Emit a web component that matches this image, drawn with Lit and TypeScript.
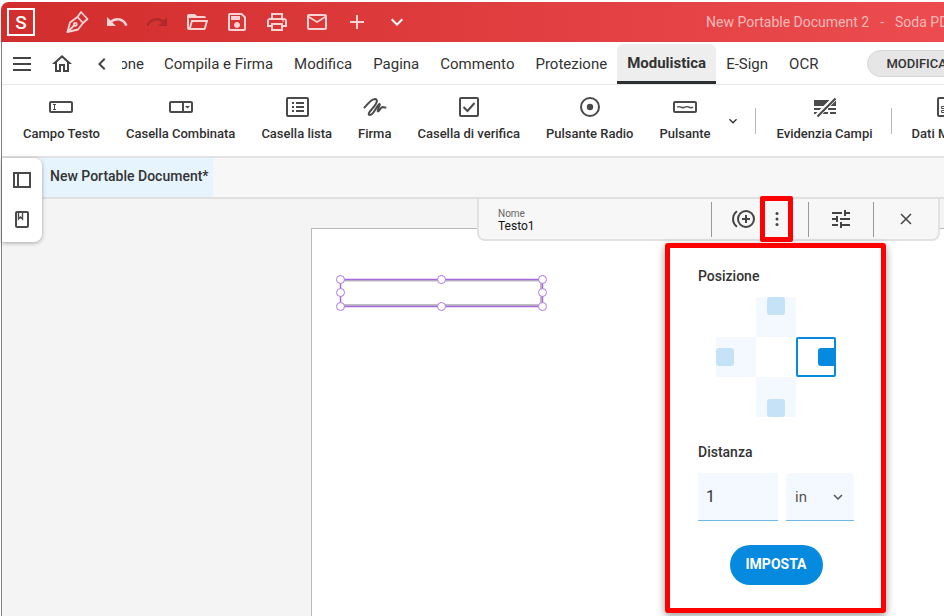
import { LitElement, html, css, svg } from "lit";
import { customElement, property, state } from "lit/decorators.js";

const fill = (d: string) => svg`<path d=${d} fill="currentColor" />`;

const ICONS: Record<string, unknown> = {
  pen: svg`<g fill="none" stroke="currentColor" stroke-width="1.8" stroke-linejoin="round" stroke-linecap="round">
    <path d="M2.500 22 5 12.500l7.500-5.500 5.500 6-5 6.500z"/><path d="m12.500 7 3.500-5 6.500 7-4.500 4M2.500 22l7-7"/><circle cx="10.300" cy="14.300" r="1.500"/></g>`,
  undo: fill("M12.5 8c-2.65 0-5.05.99-6.9 2.6L2 7v9h9l-3.62-3.62c1.39-1.16 3.16-1.88 5.12-1.88 3.54 0 6.55 2.31 7.6 5.5l2.37-.78C21.08 11.03 17.15 8 12.5 8z"),
  redo: fill("M18.4 10.6C16.55 8.99 14.15 8 11.5 8c-4.65 0-8.58 3.03-9.96 7.22L3.9 16c1.05-3.19 4.05-5.5 7.6-5.5 1.95 0 3.73.72 5.12 1.88L13 16h9V7l-3.6 3.6z"),
  folder: fill("M6.1 10 4 18V8h17a2 2 0 0 0-2-2h-7l-2-2H4a2 2 0 0 0-2 2v12a2 2 0 0 0 2 2h15c.9 0 1.7-.6 1.9-1.5L23.2 10H6.1M19 18H6l1.600-6h13L19 18z"),
  save: fill("M17 3H5c-1.110 0-2 .9-2 2v14c0 1.100.89 2 2 2h14c1.100 0 2-.9 2-2V7l-4-4m2 16H5V5h11.170L19 7.830V19m-7-7c-1.660 0-3 1.340-3 3s1.340 3 3 3 3-1.340 3-3-1.340-3-3-3M6 6h9v4H6V6z"),
  print: fill("M19 8h-1V3H6v5H5c-1.660 0-3 1.340-3 3v6h4v4h12v-4h4v-6c0-1.660-1.340-3-3-3zM8 5h8v3H8V5zm8 14H8v-4h8v4zm2-4v-2H6v2H4v-4c0-.55.45-1 1-1h14c.55 0 1 .45 1 1v4h-2zm-1-3.500h2v-1h-2z"),
  mail: fill("M22 6c0-1.100-.9-2-2-2H4c-1.100 0-2 .9-2 2v12c0 1.100.9 2 2 2h16c1.100 0 2-.9 2-2V6zm-2 0-8 5-8-5h16zm0 12H4V8l8 5 8-5v10z"),
  plus: fill("M11 5h2v6h6v2h-6v6h-2v-6H5v-2h6z"),
  down: fill("M7.410 8.580 12 13.170l4.590-4.590L18 10l-6 6-6-6 1.410-1.420z"),
  left: fill("M15.410 16.580 10.830 12l4.580-4.590L14 6l-6 6 6 6 1.410-1.420z"),
  menu: fill("M3 5h18v2H3zM3 11h18v2H3zM3 17h18v2H3z"),
  home: fill("M12 5.690l5 4.500V18h-2v-6H9v6H7v-7.810l5-4.500M12 3 2 12h3v8h6v-6h2v6h6v-8h3L12 3z"),
  text: svg`<rect x="1" y="7" width="22" height="10" rx="1" fill="none" stroke="currentColor" stroke-width="2"/>
    <path d="M4 9.500h3M4 14.500h3M5.500 9.500v5" fill="none" stroke="currentColor"/>`,
  combo: svg`<rect x="1" y="7" width="22" height="10" rx="1" fill="none" stroke="currentColor" stroke-width="2"/>
    <path d="M14 7v10" stroke="currentColor" stroke-width="2"/><path d="M16 11h5l-2.500 2.500z" fill="currentColor"/>`,
  list: svg`<rect x="2" y="3" width="21" height="18" rx="1" fill="none" stroke="currentColor" stroke-width="2"/>
    <path d="M7 8h2m2 0h8M7 12h2m2 0h8M7 16h2m2 0h8" stroke="currentColor" stroke-width="2"/>`,
  sign: svg`<path d="M1.500 12.500C5 9 8 4 12 4c4 .5 1 6-3 10-3 3.200-4.500 6-2 6 4 0 7-10.500 9.500-11 1.500 0-3 7-1.500 7.500 1.500 0 2.500-4 4.500-4.500 1 0 1.500.6 3 .5" fill="none" stroke="currentColor" stroke-width="2" stroke-linecap="round"/>`,
  check: svg`<rect x="3" y="3" width="18" height="18" rx="1" fill="none" stroke="currentColor" stroke-width="2"/>
    <path d="m6.500 12 4 4 7-8" fill="none" stroke="currentColor" stroke-width="2"/>`,
  radio: svg`<circle cx="12" cy="12" r="9" fill="none" stroke="currentColor" stroke-width="2"/><circle cx="12" cy="12" r="3.200" fill="currentColor"/>`,
  button: svg`<rect x="1" y="7" width="22" height="10" rx="1" fill="none" stroke="currentColor" stroke-width="2"/>
    <path d="M4 12.200q2-1.200 4 0t4 0 4 0 4 0" fill="none" stroke="currentColor" stroke-width="1.400"/>`,
  highlight: svg`<path d="M1 5h22v6H1zM1 13h8v2H1zm14 0h8v2h-8zM1 17h5v2H1zm9 0h5v2h-5zm7 0h6v2h-6z" fill="currentColor"/>
    <path d="M2 23 23 2" stroke="#fff" stroke-width="5"/><path d="M4.500 21.500 22.500 3.500" stroke="currentColor" stroke-width="2.200"/>`,
  data: svg`<rect x="3" y="3" width="16" height="18" rx="1" fill="none" stroke="currentColor" stroke-width="2"/>
    <path d="M6.500 11.500h10v2h-10zm0 4h10v2h-10z" fill="none" stroke="currentColor"/>`,
  panel: svg`<path d="M4 5h16v14H4zM8 5v14" fill="none" stroke="currentColor" stroke-width="2"/>`,
  bookmark: svg`<rect x="6" y="5" width="12" height="15" rx="1" fill="none" stroke="currentColor" stroke-width="2"/>
    <path d="M8.500 6v6l2-2 2 2V6" fill="none" stroke="currentColor" stroke-width="1.400"/>`,
  multi: svg`<g fill="none" stroke="currentColor" stroke-width="2"><circle cx="15" cy="12" r="8"/><path d="M15 8v8m-4-4h8M6 4.300a9.500 9.500 0 0 0 0 15.400"/></g>`,
  dots: svg`<g fill="currentColor"><circle cx="12" cy="6.500" r="1.500"/><circle cx="12" cy="12" r="1.500"/><circle cx="12" cy="17.500" r="1.500"/></g>`,
  tune: fill("M3 17v2h6v-2H3M3 5v2h10V5H3m10 16v-2h8v-2h-8v-2h-2v6h2M7 9v2H3v2h4v2h2V9H7m14 4v-2H11v2h10m-6-4h2V7h4V5h-4V3h-2v6z"),
  close: svg`<path d="m7 7 10 10M17 7 7 17" stroke="currentColor" stroke-width="1.500"/>`,
};

@customElement("ui-icon")
class UiIcon extends LitElement {
  @property() name = "";
  static styles = css`
    :host { display: block; width: 24px; height: 24px; flex: none; }
    svg { display: block; width: 100%; height: 100%; }
  `;
  render() {
    return html`<svg viewBox="0 0 24 24" aria-hidden="true">${ICONS[this.name]}</svg>`;
  }
}

const QUICK = [
  ["pen", "Firma"], ["undo", "Annulla"], ["redo", "Ripeti"], ["folder", "Apri"], ["save", "Salva"],
  ["print", "Stampa"], ["mail", "Email"], ["plus", "Nuovo"], ["down", "Altro"],
];
const MENU = ["Compila e Firma", "Modifica", "Pagina", "Commento", "Protezione", "Modulistica", "E-Sign", "OCR"];
const TOOLS = [
  ["text", "Campo Testo"], ["combo", "Casella Combinata"], ["list", "Casella lista"], ["sign", "Firma"],
  ["check", "Casella di verifica"], ["radio", "Pulsante Radio"], ["button", "Pulsante"],
];
const HANDLES = [[5, 5], [106, 5], [207, 5], [5, 18], [207, 18], [5, 32], [106, 32], [207, 32]];

@customElement("app-root")
class AppRoot extends LitElement {
  @state() private side = "right";

  static styles = css`
    :host {
      display: flex; flex-direction: column; box-sizing: border-box; min-height: 100vh;
      padding: 2px 0 0 1px; overflow: hidden; background: #fff; color: #333;
      font-family: Roboto, "Liberation Sans", sans-serif; font-size: 16px; white-space: nowrap;
    }
    * { box-sizing: border-box; }
    button, input, select { font: inherit; color: inherit; margin: 0; padding: 0; border: 0; background: none; }
    button { display: flex; align-items: center; justify-content: center; flex: none; cursor: pointer; }
    .titlebar {
      display: flex; align-items: center; height: 40px; overflow: hidden; border-radius: 8px 0 0 0; color: #fad4d4;
      background: linear-gradient(90deg, #d22d2d, #ec4c4f);
    }
    .logo {
      display: grid; place-items: center; flex: none; width: 28px; height: 28px; margin: 0 22px 0 6px;
      border: 2px solid #fff; color: #fff; font-size: 19px; font-weight: 500;
    }
    .quick { width: 40px; height: 40px; }
    .quick.off { color: #b02a2a; }
    .quick.more { color: #fff; }
    .title { display: flex; gap: 11px; margin-left: 289px; font-size: 14px; color: #f8b8b9; }
    .frame { display: flex; flex-direction: column; flex: 1; border-left: 1px solid #808080; min-width: 0; }
    .menubar { display: flex; align-items: center; gap: 1px; height: 43px; padding-top: 1px; overflow: hidden; border-bottom: 1px solid #e6e6e6; }
    .square { width: 39px; height: 42px; color: #444; }
    .cut { display: flex; justify-content: flex-end; width: 31px; overflow: hidden; padding-right: 9px; font-size: 15px; }
    .item { height: 42px; padding: 0 10px; font-size: 15px; }
    .item.on { height: 40px; align-self: flex-end; margin: 0 -1px; border-bottom: 3px solid #2c3033; border-radius: 6px 6px 0 0; background: #eee; font-weight: 700; }
    .pill { height: 27px; margin-left: 38px; padding: 0 18px; border: 1px solid #d5d5d5; border-radius: 14px; background: #e6e6e6; font-size: 13px; font-weight: 500; }
    .ribbon { display: flex; align-items: center; height: 73px; overflow: hidden; padding: 0 0 4px 8px; border-bottom: 2px solid #e2e2e2; }
    .tool { flex-direction: column; gap: 7px; padding: 0 13px; font-size: 13px; line-height: 16px; font-weight: 500; color: #303030; }
    .tool ui-icon { color: #4a4a4a; }
    .small { width: 16px; height: 16px; }
    .expand { width: 16px; margin: 4px 14px 0 1px; }
    .rule { width: 1px; height: 26px; margin: 4px 8px 0 0; background: #b8b8b8; flex: none; }
    .rule.next { margin-left: 5px; margin-right: 7px; }
    .tabs { display: flex; height: 41px; padding-left: 40px; border-bottom: 2px solid #e0e0e0; background: #f7f7f7; }
    .tab { height: 39px; padding: 0 4px 4px 8px; background: #e6f4fe; font-size: 14px; font-weight: 500; }
    .work { position: relative; flex: 1; display: flex; padding: 29px 0 0 309px; background: #f4f4f4; }
    .page { position: relative; flex: 1; border: solid #b9b9b9; border-width: 1px 0 0 1px; background: #fff; }
    .selection { position: absolute; left: 23px; top: 45px; width: 212px; height: 38px; }
    .rail { position: absolute; z-index: 2; left: 0; top: -41px; width: 40px; border-radius: 0 8px 8px 0; background: #fff; box-shadow: 0 1px 4px #0005; padding: 2px 0 4px; }
    .rail button { width: 40px; height: 39px; color: #4a4a4a; }
    .props {
      position: absolute; z-index: 1; right: 4px; top: 0; width: 463px; height: 42px; display: flex; align-items: center;
      border: 2px solid #e2e2e2; border-top: 0; border-radius: 0 0 8px 8px; background: #f7f7f7; color: #444;
    }
    .name { flex: 1; display: flex; flex-direction: column; padding: 2px 0 0 19px; font-size: 10px; line-height: 12px; color: #666; }
    .name input { width: 180px; height: 12px; font-size: 12px; color: #111; }
    .props .vr { width: 1px; height: 35px; background: #999; flex: none; }
    .add { width: 24px; margin-left: 19px; }
    .kebab { width: 33px; height: 46px; margin: 0 15px 0 5px; border: 5px solid #f00; border-radius: 2px; flex: none; }
    .cell { width: 64px; height: 40px; }
    .popover {
      position: absolute; z-index: 3; right: 58px; top: 44px; width: 221px; height: 370px; padding: 19px 27px 0 28px;
      border: 5px solid #f00; border-radius: 3px; background: #fff; box-shadow: 0 3px 8px #0006;
    }
    .heading { display: block; padding: 0; margin: 0; font-size: 14px; line-height: 18px; font-weight: 500; color: #333; }
    fieldset { border: 0; margin: 0; padding: 0; min-width: 0; }
    .cross { display: grid; grid-template: repeat(3, 40px) / repeat(3, 40px); justify-content: center; margin: 12px 0 26px; }
    .spot { appearance: none; display: flex; width: 40px; height: 40px; align-items: center; justify-content: center; background: #f3f9fe; }
    .spot::before { content: ""; width: 18px; height: 18px; border-radius: 3px; background: #c5e3f7; }
    .spot.top { grid-area: 1 / 2; align-items: flex-start; }
    .spot.left { grid-area: 2 / 1; justify-content: flex-start; }
    .spot.right { grid-area: 2 / 3; justify-content: flex-end; }
    .spot.bottom { grid-area: 3 / 2; align-items: flex-end; }
    .spot:checked { border: 2px solid #068ae0; border-radius: 2px; background: #fff; }
    .spot:checked::before { width: 16px; background: #068ae0; border-radius: 3px 0 0 3px; }
    .distance { display: flex; gap: 8px; margin: 12px 0 24px; }
    .amount { width: 80px; height: 48px; padding: 0 8px; border-bottom: 1px solid #6db9e8; background: #f3f9fe; }
    .unit { position: relative; display: flex; align-items: center; width: 68px; height: 48px; border-bottom: 1px solid #6db9e8; border-radius: 4px 4px 0 0; background: #f3f9fe; color: #555; }
    .unit select { appearance: none; width: 100%; height: 100%; padding-left: 9px; font-size: 15px; }
    .unit ui-icon { position: absolute; right: 7px; width: 18px; height: 18px; pointer-events: none; }
    .apply { height: 40px; margin: 0 auto; padding: 0 16px 2px; border-radius: 20px; background: #068ae0; color: #fff; font-size: 14px; font-weight: 700; }
  `;

  private tool(icon: string, label: string) {
    return html`<button class="tool"><ui-icon name=${icon}></ui-icon>${label}</button>`;
  }

  render() {
    return html`
      <header class="titlebar">
        <div class="logo">S</div>
        ${QUICK.map(([icon, label]) => html`
          <button class="quick ${icon === "redo" ? "off" : icon === "down" ? "more" : ""}" aria-label=${label}><ui-icon name=${icon}></ui-icon></button>`)}
        <div class="title"><span>New Portable Document 2</span><span>-</span><span>Soda PDF</span></div>
      </header>
      <div class="frame">
        <nav class="menubar">
          <button class="square" aria-label="Menu"><ui-icon name="menu"></ui-icon></button>
          <button class="square" aria-label="Home"><ui-icon name="home"></ui-icon></button>
          <button class="square" aria-label="Indietro"><ui-icon name="left"></ui-icon></button>
          <button class="cut">Visualizzazione</button>
          ${MENU.map((label) => html`<button class="item ${label === "Modulistica" ? "on" : ""}">${label}</button>`)}
          <button class="pill">MODIFICA</button>
        </nav>
        <div class="ribbon">
          ${TOOLS.map(([icon, label]) => this.tool(icon, label))}
          <button class="expand" aria-label="Altri campi"><ui-icon class="small" name="down"></ui-icon></button>
          <span class="rule"></span>
          ${this.tool("highlight", "Evidenzia Campi")}
          <span class="rule next"></span>
          ${this.tool("data", "Dati Modulo")}
        </div>
        <div class="tabs"><button class="tab">New Portable Document*</button></div>
        <main class="work">
          <div class="rail">
            <button aria-label="Pagine"><ui-icon name="panel"></ui-icon></button>
            <button aria-label="Segnalibri"><ui-icon name="bookmark"></ui-icon></button>
          </div>
          <div class="page">
            <svg class="selection" viewBox="0 0 212 38">
              <path d="M6 6.500h200M6 31h200M206 6v26" fill="none" stroke="#bdbdbd" stroke-width="2" />
              <rect x="5.500" y="5.500" width="202" height="27" fill="none" stroke="#a768dc" stroke-width="1.500" />
              ${HANDLES.map(([x, y]) => svg`<circle cx=${x + 0.5} cy=${y + 0.5} r="4" fill="#fff" stroke="#b078e4"/>`)}
            </svg>
          </div>
          <div class="props">
            <label class="name">Nome<input value="Testo1" /></label>
            <span class="vr"></span>
            <button class="add" aria-label="Duplica"><ui-icon name="multi"></ui-icon></button>
            <button class="kebab" aria-label="Opzioni"><ui-icon name="dots"></ui-icon></button>
            <span class="vr"></span>
            <button class="cell" aria-label="Proprietà"><ui-icon name="tune"></ui-icon></button>
            <span class="vr"></span>
            <button class="cell" aria-label="Chiudi"><ui-icon name="close"></ui-icon></button>
          </div>
          <section class="popover">
            <fieldset>
              <legend class="heading">Posizione</legend>
              <div class="cross">
                ${["top", "left", "right", "bottom"].map((s) => html`
                  <input type="radio" name="side" class="spot ${s}" aria-label=${s} .checked=${this.side === s} @change=${() => (this.side = s)} />`)}
              </div>
            </fieldset>
            <label class="heading" for="amount">Distanza</label>
            <div class="distance">
              <input id="amount" class="amount" value="1" />
              <div class="unit">
                <select aria-label="Unità"><option>in</option><option>cm</option></select>
                <ui-icon name="down"></ui-icon>
              </div>
            </div>
            <button class="apply">IMPOSTA</button>
          </section>
        </main>
      </div>
    `;
  }
}
